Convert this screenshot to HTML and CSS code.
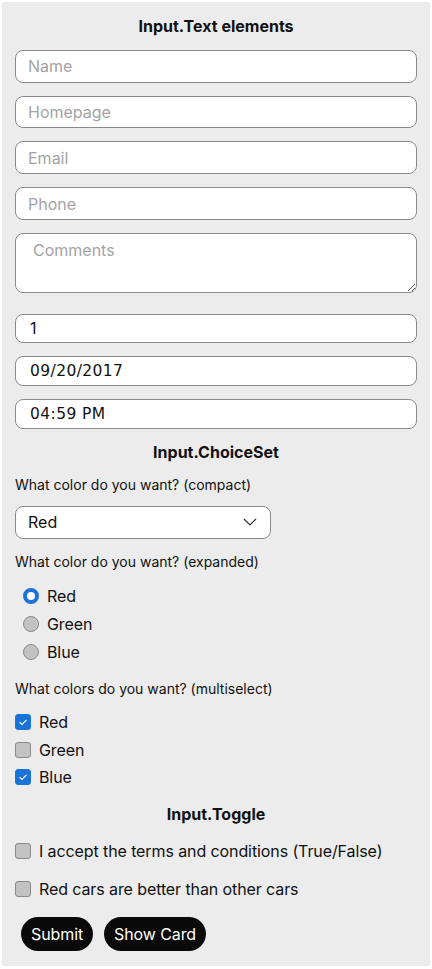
FILE: index.html
```html
<!DOCTYPE html>
<html>
<head>
<meta charset="utf-8">
<link rel="stylesheet" href="styles.css">
</head>
<body>
<div class="card">
  <div class="title">Input.Text elements</div>
  <input class="field first" type="text" placeholder="Name">
  <input class="field" type="text" placeholder="Homepage">
  <input class="field" type="text" placeholder="Email">
  <input class="field" type="text" placeholder="Phone">
  <textarea class="field area" placeholder="Comments"></textarea>
  <input class="field small num" type="text" value="1">
  <input class="field small mono" type="text" value="09/20/2017">
  <input class="field small mono" type="text" value="04:59 PM">

  <div class="title">Input.ChoiceSet</div>
  <div class="label">What color do you want? (compact)</div>
  <div class="select">
    <span>Red</span>
    <svg class="chev" width="14" height="8" viewBox="0 0 14 8"><path d="M1 1 L7 7 L13 1" fill="none" stroke="#333" stroke-width="1.2"/></svg>
  </div>
  <div class="label">What color do you want? (expanded)</div>
  <div class="radios">
    <label class="opt"><input type="radio" name="c" class="radio" checked><span>Red</span></label>
    <label class="opt"><input type="radio" name="c" class="radio"><span>Green</span></label>
    <label class="opt"><input type="radio" name="c" class="radio"><span>Blue</span></label>
  </div>
  <div class="label">What colors do you want? (multiselect)</div>
  <div class="checks">
    <label class="opt"><input type="checkbox" class="check" checked><span>Red</span></label>
    <label class="opt"><input type="checkbox" class="check"><span>Green</span></label>
    <label class="opt"><input type="checkbox" class="check" checked><span>Blue</span></label>
  </div>

  <div class="title">Input.Toggle</div>
  <div class="toggles">
    <label class="opt"><input type="checkbox" class="check"><span>I accept the terms and conditions (True/False)</span></label>
    <label class="opt"><input type="checkbox" class="check"><span>Red cars are better than other cars</span></label>
  </div>

  <div class="actions">
    <button class="btn">Submit</button>
    <button class="btn">Show Card</button>
  </div>
</div>
</body>
</html>
```

FILE: styles.css
```css
html, body {
  margin: 0;
  padding: 0;
  background: #ffffff;
}
body {
  padding: 2px;
  font-family: Inter, "Noto Sans", sans-serif;
  color: #111;
}
.card {
  background: #ececec;
  width: 428px;
  height: 964px;
  box-sizing: border-box;
  padding: 14px 13px 15px 13px;
  display: flex;
  flex-direction: column;
  gap: 13px;
}
.title {
  font-weight: 700;
  font-size: 16px;
  line-height: 20px;
  text-align: center;
  color: #111;
}
.field {
  display: block;
  box-sizing: border-box;
  width: 402px;
  height: 33px;
  margin: 0;
  border: 1px solid #8a8a8a;
  border-radius: 8px;
  background: #fff;
  padding: 0 12px;
  font-family: Inter, "Noto Sans", sans-serif;
  font-size: 16px;
  color: #111;
  outline: none;
}
.first {
  margin-top: 1px;
}
.field::placeholder {
  color: #a3a3a3;
}
.area {
  height: 60px;
  padding: 6px 17px;
  resize: vertical;
  margin-bottom: 8px;
}
.small {
  height: 30px;
  padding: 0 14px;
}
.num {
  font-family: Inter, "Noto Sans", sans-serif;
}
.mono {
  font-family: "DejaVu Sans", sans-serif;
  font-size: 15.5px;
  letter-spacing: 0.4px;
}
.label {
  font-size: 14px;
  line-height: 20px;
  color: #111;
}
.select {
  box-sizing: border-box;
  width: 256px;
  height: 33px;
  border: 1px solid #8a8a8a;
  border-radius: 8px;
  background: #fff;
  display: flex;
  align-items: center;
  justify-content: space-between;
  padding: 0 13px 0 12px;
  font-size: 16px;
  margin-top: -2px;
}
.radios {
  display: flex;
  flex-direction: column;
  padding-left: 8px;
  margin-top: -3px;
}
.opt {
  display: flex;
  align-items: center;
  gap: 8px;
  font-size: 16px;
  height: 28px;
  letter-spacing: -0.1px;
}
.checks .opt {
  height: 27.5px;
}
.checks {
  display: flex;
  flex-direction: column;
  margin-top: -3px;
}
.toggles {
  display: flex;
  flex-direction: column;
  gap: 10px;
}
.radio {
  appearance: none;
  -webkit-appearance: none;
  margin: 0;
  width: 16px;
  height: 16px;
  border-radius: 50%;
  border: 1px solid #8a8a8a;
  background: #c2c2c2;
  box-sizing: border-box;
}
.radio:checked {
  border: 4px solid #1a73d6;
  background: #fff;
}
.check {
  appearance: none;
  -webkit-appearance: none;
  margin: 0;
  width: 16px;
  height: 16px;
  border-radius: 3px;
  border: 1px solid #8a8a8a;
  background: #c2c2c2;
  box-sizing: border-box;
  flex: none;
}
.check:checked {
  border-color: #1a73d6;
  background: #1a73d6 url("data:image/svg+xml;utf8,<svg xmlns='http://www.w3.org/2000/svg' width='16' height='16' viewBox='0 0 16 16'><path d='M4.5 8.2 L7 10.5 L11.5 5.8' fill='none' stroke='white' stroke-width='1.1'/></svg>") center/16px 16px no-repeat;
}
.actions {
  display: flex;
  gap: 11px;
  padding-left: 6px;
  margin-top: 1px;
}
.btn {
  height: 34px;
  border: none;
  border-radius: 17px;
  background: #0a0a0a;
  color: #fff;
  font-family: Inter, "Noto Sans", sans-serif;
  font-size: 16px;
  padding: 0 10px;
  letter-spacing: -0.1px;
}
```
